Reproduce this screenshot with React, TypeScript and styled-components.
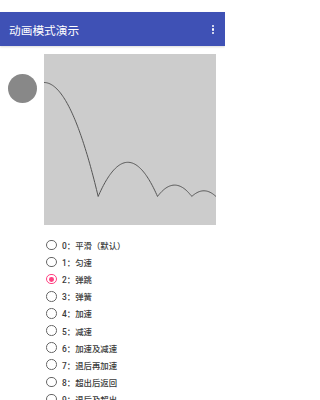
import React, { useState } from 'react'
import styled, { createGlobalStyle } from 'styled-components'

const GlobalStyle = createGlobalStyle`
  html, body {
    margin: 0;
    padding: 0;
    background: #ffffff;
    font-family: Roboto, "Noto Sans CJK SC", sans-serif;
  }
`

const options = [
  '0：平滑（默认）',
  '1：匀速',
  '2：弹跳',
  '3：弹簧',
  '4：加速',
  '5：减速',
  '6：加速及减速',
  '7：退后再加速',
  '8：超出后返回',
  '9：退后及超出',
]

const bounce = (t: number) => t * t * 8
const bounceInterpolator = (input: number) => {
  const t = input * 1.1226
  if (t < 0.3535) return bounce(t)
  if (t < 0.7408) return bounce(t - 0.54719) + 0.7
  if (t < 0.9644) return bounce(t - 0.8526) + 0.9
  return bounce(t - 1.0435) + 0.95
}

const BOX_W = 172
const BOX_H = 171

const curvePath = () => {
  const pad = BOX_H / 6
  const range = BOX_H - pad * 2
  const pts: string[] = []
  for (let i = 0; i <= 200; i++) {
    const t = i / 200
    const x = t * BOX_W
    const y = pad + bounceInterpolator(t) * range
    pts.push(`${i === 0 ? 'M' : 'L'}${x.toFixed(2)},${y.toFixed(2)}`)
  }
  return pts.join(' ')
}

export default function App() {
  const [selected, setSelected] = useState(2)

  return (
    <Page>
      <GlobalStyle />
      <StatusBar />
      <Toolbar>
        <Title>动画模式演示</Title>
        <MenuButton>
          <Dot />
          <Dot />
          <Dot />
        </MenuButton>
      </Toolbar>
      <Stage>
        <BallLane>
          <Ball />
        </BallLane>
        <Graph>
          <svg width={BOX_W} height={BOX_H}>
            <path d={curvePath()} fill="none" stroke="#555" strokeWidth="1" />
          </svg>
        </Graph>
      </Stage>
      <OptionList>
        {options.map((label, i) => (
          <OptionRow key={label} onClick={() => setSelected(i)}>
            <Radio checked={selected === i} />
            <OptionLabel>{label}</OptionLabel>
          </OptionRow>
        ))}
      </OptionList>
    </Page>
  )
}

const Page = styled.div`
  width: 225px;
  height: 400px;
  overflow: hidden;
  background: #fff;
`

const StatusBar = styled.div`
  height: 12px;
  background: #fff;
`

const Toolbar = styled.div`
  height: 34px;
  background: #3f51b5;
  display: flex;
  align-items: center;
  justify-content: space-between;
  padding: 0 11px 0 9px;
  box-shadow: 0 1px 2px rgba(0, 0, 0, 0.15);
`

const Title = styled.span`
  color: #fff;
  font-size: 11.7px;
`

const MenuButton = styled.div`
  display: flex;
  flex-direction: column;
  gap: 1.6px;
  margin-top: 1px;
`

const Dot = styled.span`
  width: 2.2px;
  height: 2.2px;
  border-radius: 50%;
  background: #fff;
`

const Stage = styled.div`
  display: flex;
  padding-top: 8px;
`

const BallLane = styled.div`
  width: 44px;
  padding: 20px 0 0 7.5px;
  box-sizing: border-box;
`

const Ball = styled.div`
  width: 29px;
  height: 29px;
  border-radius: 50%;
  background: #888888;
`

const Graph = styled.div`
  width: ${BOX_W}px;
  height: ${BOX_H}px;
  background: #cccccc;
  svg {
    display: block;
  }
`

const OptionList = styled.div`
  display: flex;
  flex-direction: column;
  padding: 11.5px 0 0 46px;
`

const OptionRow = styled.div`
  display: flex;
  align-items: center;
  height: 17.1px;
  cursor: pointer;
`

const Radio = styled.span<{ checked: boolean }>`
  width: 10.5px;
  height: 10.5px;
  box-sizing: border-box;
  border-radius: 50%;
  border: 1.3px solid ${p => (p.checked ? '#ff4081' : '#666')};
  display: flex;
  align-items: center;
  justify-content: center;
  &::after {
    content: '';
    width: 4.8px;
    height: 4.8px;
    border-radius: 50%;
    background: #ff4081;
    display: ${p => (p.checked ? 'block' : 'none')};
  }
`

const OptionLabel = styled.span`
  margin-left: 5.5px;
  font-size: 8.4px;
  font-weight: 500;
  color: #3a3a3a;
  white-space: nowrap;
`
